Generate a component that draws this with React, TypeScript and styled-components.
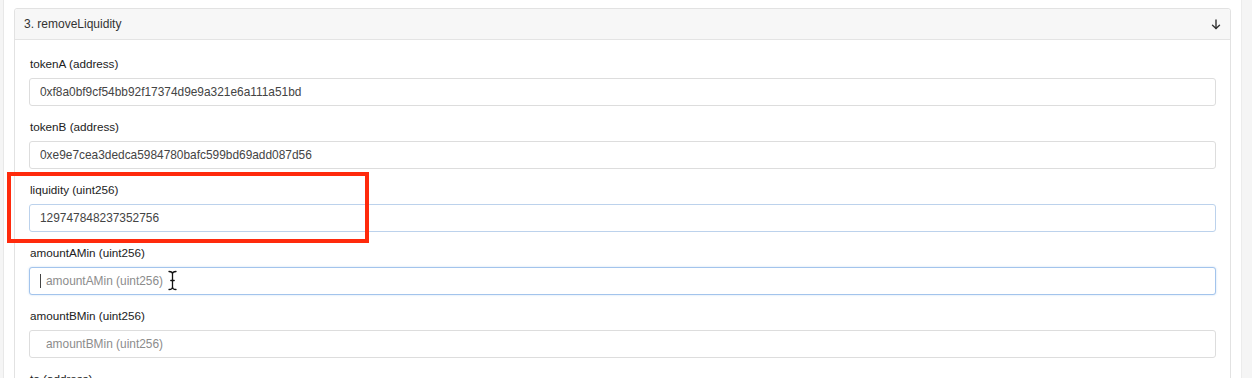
import React from "react";
import styled, { createGlobalStyle, css } from "styled-components";

const GlobalStyle = createGlobalStyle`
  html, body { margin: 0; padding: 0; }
  body {
    background: #f5f5f5;
    font-family: "Liberation Sans", Arial, Helvetica, sans-serif;
    overflow: hidden;
  }
`;

const Page = styled.div`
  position: relative;
  width: 1252px;
  height: 378px;
  overflow: hidden;
`;

const Panel = styled.div`
  margin-left: 3px;
  width: 1239px;
  min-height: 378px;
  box-sizing: border-box;
  background: #ffffff;
  border-left: 1px solid #e8e8e8;
  border-right: 1px solid #ececec;
  padding: 8px 10px 0 10px;
`;

const Card = styled.div`
  border: 1px solid #e2e2e2;
  border-radius: 3px;
  background: #fff;
`;

const CardHeader = styled.div`
  height: 30px;
  display: flex;
  align-items: center;
  justify-content: space-between;
  padding: 0 9px;
  background: #f7f7f7;
  border-bottom: 1px solid #e4e4e4;
  border-radius: 3px 3px 0 0;
  font-size: 12px;
  color: #333;
`;

const ArrowIcon = styled.svg`
  width: 10px;
  height: 11px;
  margin-top: 1px;
`;

const CardBody = styled.div`
  padding: 16px 14px 0 14px;
`;

const Field = styled.div`
  display: flex;
  flex-direction: column;
  gap: 7px;
  margin-bottom: 13px;
`;

const Label = styled.label`
  box-sizing: border-box;
  font-size: 11.7px;
  line-height: 14px;
  height: 15px;
  padding: 1px 0 0 1px;
  color: #222;
`;

const Input = styled.input<{ $state?: "idle" | "soft" | "focus"; $empty?: boolean }>`
  box-sizing: border-box;
  height: 28px;
  width: 100%;
  border: 1px solid #dddddd;
  border-radius: 3px;
  padding: 0 10px;
  padding-left: ${(p) => (p.$empty ? "16px" : "10px")};
  font-family: "Liberation Sans", Arial, Helvetica, sans-serif;
  font-size: 11.9px;
  color: #444;
  background: #fff;
  outline: none;
  &::placeholder {
    color: #8c8c8c;
  }
  ${(p) =>
    p.$state === "soft" &&
    css`
      border-color: #bcd2ec;
    `}
  ${(p) =>
    p.$state === "focus" &&
    css`
      border-color: #a3c4ec;
      box-shadow: 0 0 2px rgba(120, 170, 230, 0.45);
    `}
`;

const Highlight = styled.div`
  position: absolute;
  left: 7px;
  top: 172px;
  width: 362px;
  height: 71px;
  box-sizing: border-box;
  border: 4px solid #ff2a0c;
  pointer-events: none;
`;

const Caret = styled.div`
  position: absolute;
  left: 40px;
  top: 274px;
  width: 1px;
  height: 14px;
  background: #444;
`;

const IBeam = styled.svg`
  position: absolute;
  left: 167px;
  top: 270px;
  width: 11px;
  height: 21px;
`;

type FieldDef = {
  label: string;
  value?: string;
  placeholder?: string;
  state?: "idle" | "soft" | "focus";
};

const fields: FieldDef[] = [
  { label: "tokenA (address)", value: "0xf8a0bf9cf54bb92f17374d9e9a321e6a111a51bd" },
  { label: "tokenB (address)", value: "0xe9e7cea3dedca5984780bafc599bd69add087d56" },
  { label: "liquidity (uint256)", value: "129747848237352756", state: "soft" },
  { label: "amountAMin (uint256)", placeholder: "amountAMin (uint256)", state: "focus" },
  { label: "amountBMin (uint256)", placeholder: "amountBMin (uint256)" },
  { label: "to (address)", placeholder: "to (address)" },
];

export default function App() {
  return (
    <>
      <GlobalStyle />
      <Page>
        <Panel>
          <Card>
            <CardHeader>
              <span>3. removeLiquidity</span>
              <ArrowIcon viewBox="0 0 10 11" fill="none" stroke="#333" strokeWidth="1.4" strokeLinecap="round" strokeLinejoin="round">
                <path d="M5 1 V9.5" />
                <path d="M1.5 6.3 L5 9.6 L8.5 6.3" />
              </ArrowIcon>
            </CardHeader>
            <CardBody>
              {fields.map((f) => (
                <Field key={f.label}>
                  <Label>{f.label}</Label>
                  <Input
                    readOnly
                    value={f.value ?? ""}
                    placeholder={f.placeholder}
                    $state={f.state ?? "idle"}
                    $empty={!f.value}
                  />
                </Field>
              ))}
            </CardBody>
          </Card>
        </Panel>
        <Highlight />
        <Caret />
        <IBeam viewBox="0 0 11 21" fill="none" stroke="#111" strokeWidth="1.3" strokeLinecap="round">
          <path d="M2 1.5 Q5.5 1.5 5.5 4 Q5.5 1.5 9 1.5" />
          <path d="M5.5 4 V17" />
          <path d="M2 19.5 Q5.5 19.5 5.5 17 Q5.5 19.5 9 19.5" />
          <path d="M3.8 10.5 H7.2" />
        </IBeam>
      </Page>
    </>
  );
}
